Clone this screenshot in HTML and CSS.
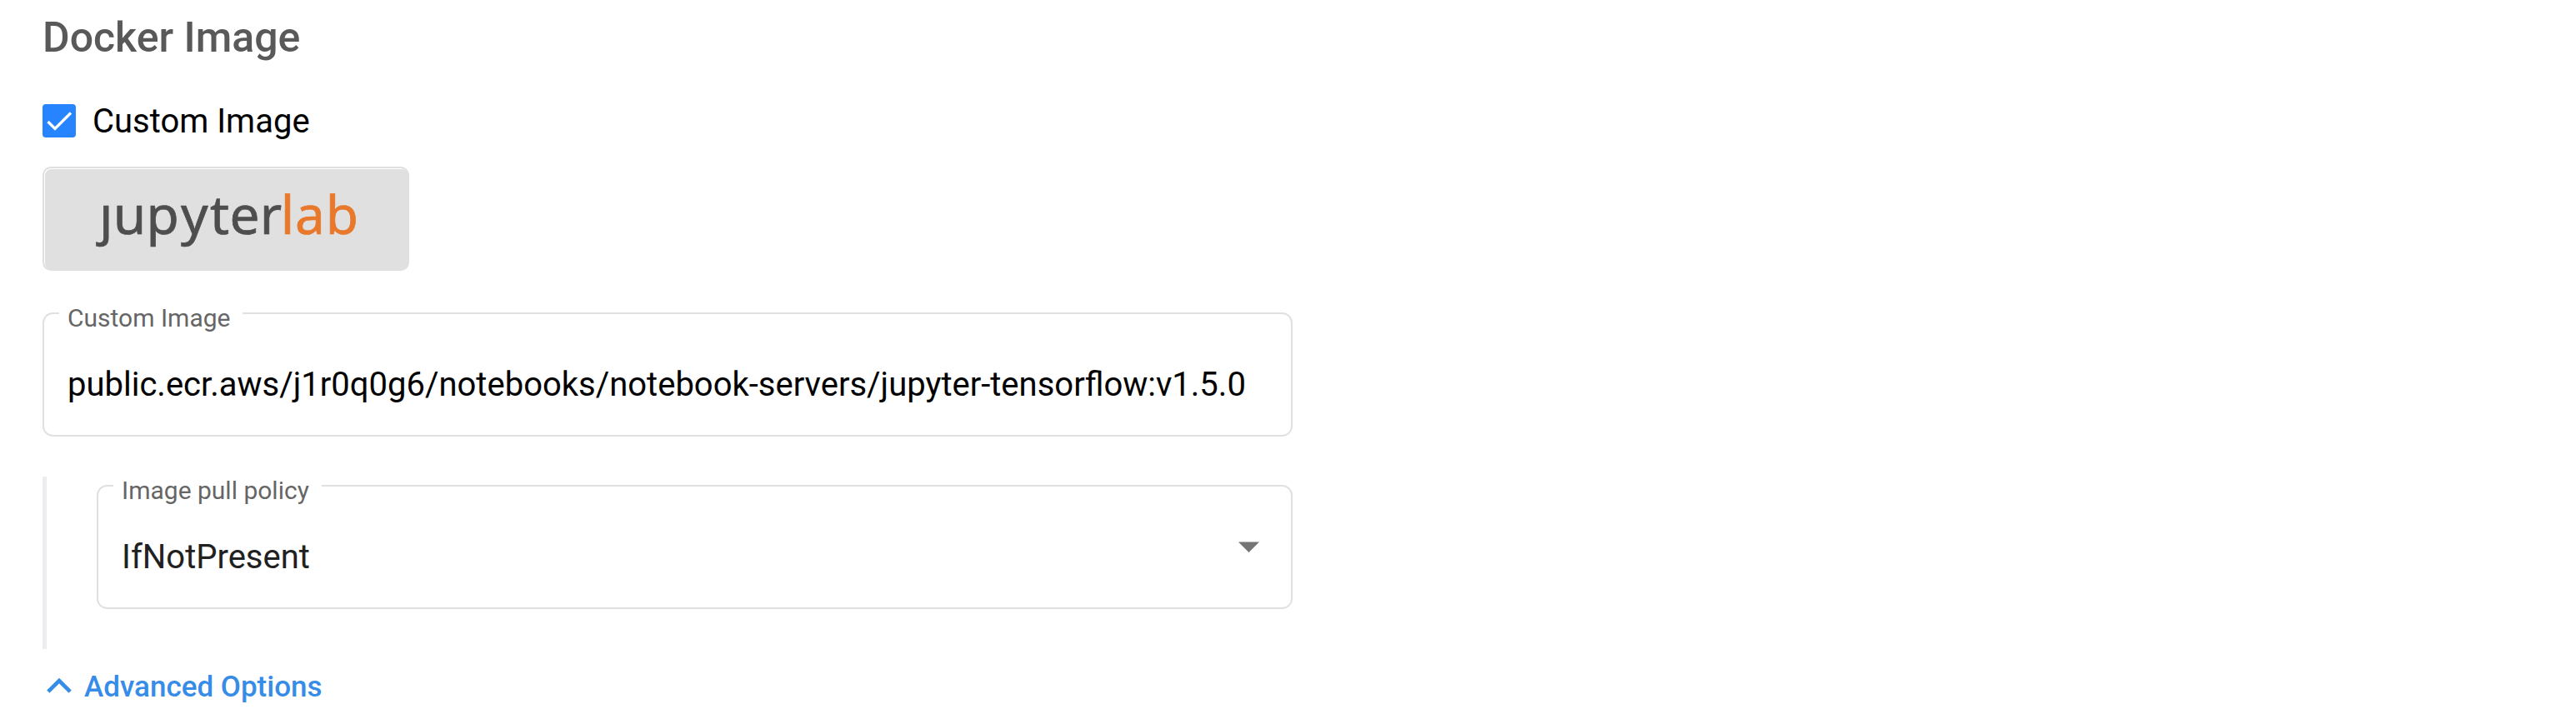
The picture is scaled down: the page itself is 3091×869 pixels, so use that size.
FILE: index.html
```html
<!DOCTYPE html>
<html lang="en">
<head>
<meta charset="utf-8">
<title>Docker Image</title>
<link rel="stylesheet" href="styles.css">
</head>
<body>
<main class="form">
  <h3 class="title">Docker Image</h3>
  <label class="check">
    <svg class="check-box" viewBox="0 0 40 40"><rect width="40" height="40" rx="4" fill="#2684ff"/><path d="M6.5 21L15 29.5L34 10.5" fill="none" stroke="#fff" stroke-width="3.3"/></svg>
    <span class="check-text">Custom Image</span>
  </label>
  <div class="server-type">
    <svg class="logo" viewBox="0 0 436 121">
      <text class="logo-text" y="79" x="66 82.700 122.500 164 199 222.500 258.700 283.700 301 337.700">ȷupyter<tspan class="logo-lab">lab</tspan></text>
    </svg>
  </div>
  <div class="field">
    <span class="field-label">Custom Image</span>
    <span class="field-value">public.ecr.aws/j1r0q0g6/notebooks/notebook-servers/jupyter-tensorflow:v1.5.0</span>
  </div>
  <div class="advanced">
    <div class="field">
      <span class="field-label field-label-policy">Image pull policy</span>
      <span class="field-value field-value-select">IfNotPresent</span>
      <svg class="arrow" viewBox="0 0 25 13"><path d="M0 .4H25L12.500 13Z" fill="#757575"/></svg>
    </div>
  </div>
  <div class="toggle">
    <svg class="chevron" viewBox="0 0 30 18"><path d="M1.800 16.200L15 3L28.200 16.200" fill="none" stroke="#368ce7" stroke-width="4.600"/></svg>
    <span>Advanced Options</span>
  </div>
</main>
</body>
</html>
```
FILE: styles.css
```css
body {
  margin: 0;
  background: #fff;
  font-family: Roboto, sans-serif;
}
.form {
  box-sizing: border-box;
  width: 1551px;
  height: 869px;
  padding: 15px 0 0 51px;
  overflow: hidden;
}
.title {
  margin: 0 0 50px;
  font-size: 50px;
  line-height: 60px;
  font-weight: 500;
  color: #595959;
}
.check {
  display: flex;
  gap: 20px;
  height: 40px;
  font-size: 40px;
  line-height: 42px;
  color: #000;
}
.check-box {
  width: 40px;
  height: 40px;
}
.server-type {
  box-sizing: border-box;
  width: 440px;
  height: 125px;
  margin-top: 35px;
  border: 2px solid #e0e0e0;
  border-radius: 10px;
  background: #e0e0e0;
  box-shadow: inset 1px 1px 0 #fff;
}
.logo {
  display: block;
  width: 436px;
  height: 121px;
}
.logo-text {
  font-family: "Noto Sans", "Open Sans", sans-serif;
  font-size: 64px;
  fill: #4e4e4e;
  stroke: #4e4e4e;
  stroke-width: 0.7px;
}
.logo-lab {
  fill: #e8782b;
  stroke: #e8782b;
}
.field {
  position: relative;
  box-sizing: border-box;
  display: flex;
  height: 149px;
  margin-top: 50px;
  padding: 64px 38px 0 28px;
  border: 2px solid #e0e0e0;
  border-radius: 12.5px;
}
.field-label {
  position: absolute;
  top: -10px;
  left: 18px;
  box-sizing: border-box;
  width: 220px;
  padding-left: 10px;
  background: #fff;
  font-size: 30px;
  line-height: 30px;
  white-space: nowrap;
  color: #666;
}
.field-label-policy {
  width: 250px;
}
.field-value {
  flex: 1;
  font-size: 40px;
  line-height: 42px;
  white-space: nowrap;
  color: #000;
}
.field-value-select {
  color: #212121;
}
.arrow {
  width: 25px;
  height: 13px;
  margin-top: 2px;
}
.advanced {
  box-sizing: border-box;
  height: 207px;
  margin-top: 48px;
  padding: 10px 0 0 60px;
  border-left: 5px solid #ebedf0;
}
.advanced .field {
  margin-top: 0;
}
.toggle {
  display: flex;
  align-items: flex-start;
  margin-top: 25px;
  font-size: 35px;
  line-height: 42px;
  font-weight: 500;
  color: #368ce7;
}
.chevron {
  width: 30px;
  height: 18px;
  margin: 10px 15px 0 5px;
}
```
